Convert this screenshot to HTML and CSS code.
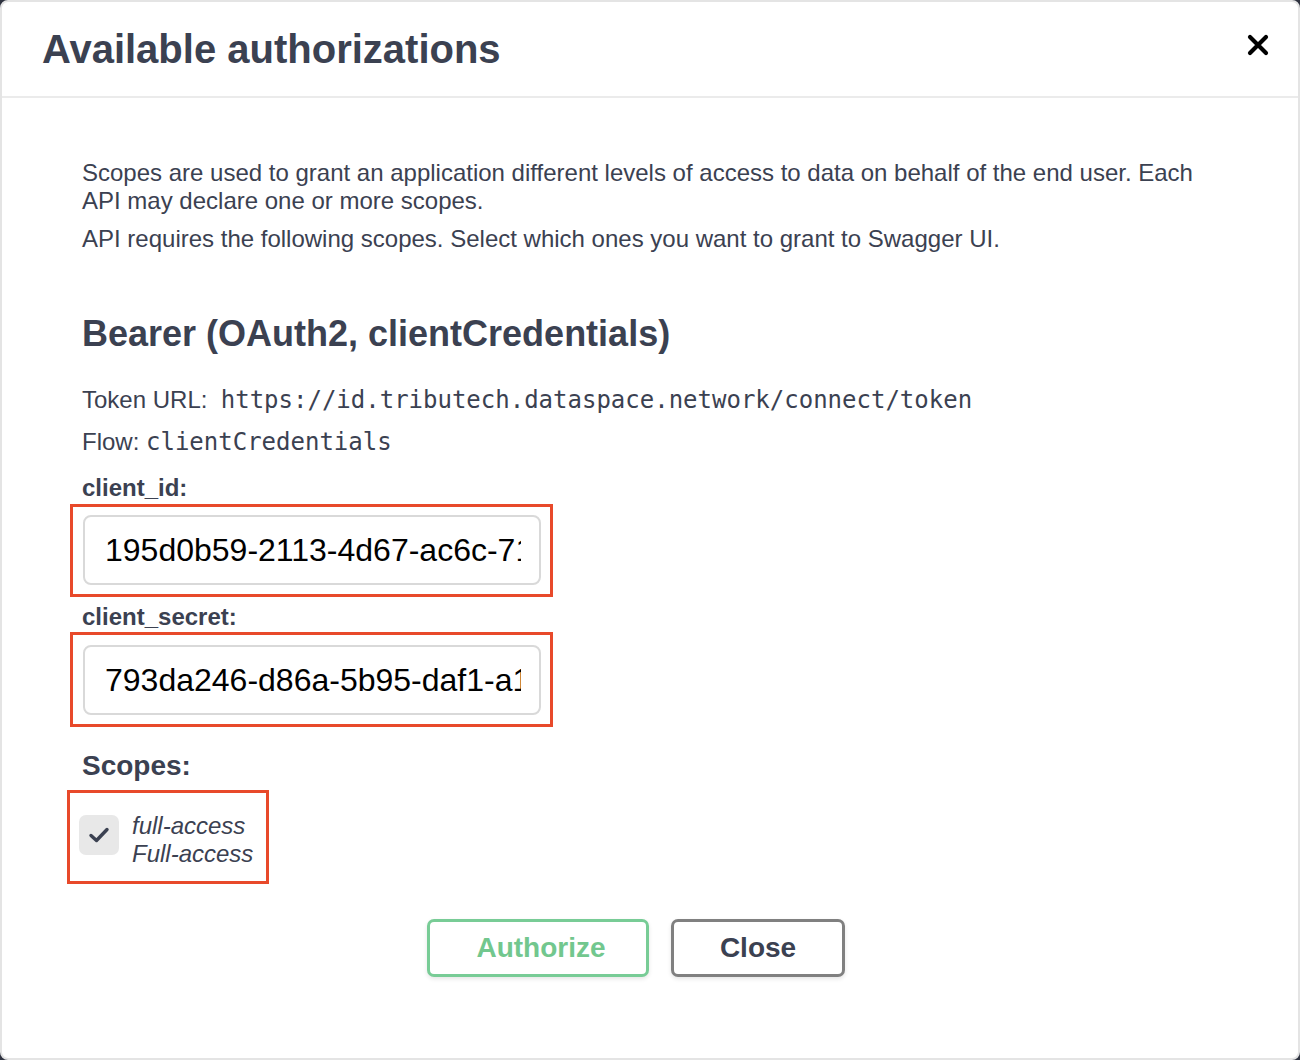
FILE: index.html
```html
<!DOCTYPE html>
<html lang="en">
<head>
<meta charset="utf-8">
<title>Available authorizations</title>
<link rel="stylesheet" href="styles.css">
</head>
<body>
<div class="modal">
  <div class="modal-header">
    <h3 class="modal-title">Available authorizations</h3>
    <button class="close-modal" type="button" aria-label="Close">
      <svg width="24" height="24" viewBox="0 0 24 24"><path d="M4 4 L20 20 M20 4 L4 20" stroke="#000" stroke-width="4.2" stroke-linecap="round" fill="none"/></svg>
    </button>
  </div>
  <div class="modal-content">
    <div class="scope-def">
      <p>Scopes are used to grant an application different levels of access to data on behalf of the end user. Each API may declare one or more scopes.</p>
      <p class="second">API requires the following scopes. Select which ones you want to grant to Swagger UI.</p>
    </div>
    <h4 class="auth-name">Bearer (OAuth2, clientCredentials)</h4>
    <p class="flow-row token-row">Token URL:&nbsp; <code>https://id.tributech.dataspace.network/connect/token</code></p>
    <p class="flow-row flow-line">Flow: <code>clientCredentials</code></p>
    <label class="field-label first-label">client_id:</label>
    <div class="mark mark-input">
      <input class="text-input" type="text" value="195d0b59-2113-4d67-ac6c-71a2e3f4b5c6">
    </div>
    <label class="field-label second-label">client_secret:</label>
    <div class="mark mark-input mark-second">
      <input class="text-input" type="text" value="793da246-d86a-5b95-daf1-a1c2b3d4e5f6">
    </div>
    <h4 class="scopes-label">Scopes:</h4>
    <div class="mark mark-scope">
      <span class="checkbox">
        <svg width="22" height="18" viewBox="0 0 22 18"><path d="M3 9.5 L8.5 14.5 L19 3.5" stroke="#3b4151" stroke-width="3.4" fill="none" stroke-linecap="round" stroke-linejoin="round"/></svg>
      </span>
      <span class="scope-text">
        <span>full-access</span>
        <span>Full-access</span>
      </span>
    </div>
    <div class="btn-wrapper">
      <button class="btn authorize" type="button">Authorize</button>
      <button class="btn btn-close" type="button">Close</button>
    </div>
  </div>
</div>
</body>
</html>
```

FILE: styles.css
```css
* { box-sizing: border-box; }
html, body {
  margin: 0;
  padding: 0;
  background: #2f3340;
}
body {
  font-family: "Liberation Sans", Arial, sans-serif;
  color: #3b4151;
}
.modal {
  width: 1300px;
  height: 1060px;
  background: #fff;
  border: 2px solid #e4e4e4;
  border-radius: 8px;
  overflow: hidden;
}
.modal-header {
  height: 96px;
  border-bottom: 2px solid #ebebeb;
  display: flex;
  align-items: center;
  justify-content: space-between;
  padding: 0 28px 0 40px;
}
.modal-title {
  margin: 0;
  font-size: 40px;
  font-weight: bold;
  line-height: 46px;
  color: #3b4151;
}
.close-modal {
  border: 0;
  background: none;
  padding: 0;
  margin-bottom: 8px;
  width: 24px;
  height: 24px;
  display: flex;
}
.modal-content {
  padding: 61px 80px 0 80px;
  display: flex;
  flex-direction: column;
  align-items: flex-start;
}
.scope-def p {
  margin: 0;
  font-size: 24px;
  line-height: 28px;
  color: #3b4151;
}
.scope-def p.second { margin-top: 10px; }
.auth-name {
  margin: 60px 0 0 0;
  font-size: 36px;
  line-height: 42px;
  font-weight: bold;
}
.flow-row {
  margin: 0;
  font-size: 24px;
  line-height: 28px;
}
.token-row { margin-top: 31px; }
.flow-line { margin-top: 14px; }
.flow-row code {
  font-family: "DejaVu Sans Mono", "Liberation Mono", monospace;
  font-size: 24px;
  color: #3b4151;
}
.field-label {
  display: block;
  font-size: 24px;
  line-height: 28px;
  font-weight: bold;
}
.first-label { margin-top: 18px; }
.second-label { margin-top: 6px; }
.mark {
  border: 3px solid #e8492a;
}
.mark-input {
  margin-top: 2px;
  margin-left: -12px;
  padding: 8px 9px 9px 10px;
}
.mark-second { margin-top: 1px; padding-top: 10px; }
.text-input {
  display: block;
  width: 458px;
  height: 70px;
  border: 2px solid #d9d9d9;
  border-radius: 8px;
  padding: 0 18px 0 20px;
  font-family: "Liberation Sans", Arial, sans-serif;
  font-size: 32px;
  color: #000;
  background: #fff;
  outline: none;
}
.scopes-label {
  margin: 23px 0 0 0;
  font-size: 28px;
  line-height: 32px;
  font-weight: bold;
}
.mark-scope {
  margin-top: 8px;
  margin-left: -15px;
  width: 202px;
  height: 94px;
  display: flex;
  align-items: flex-start;
  gap: 13px;
  padding: 19px 0 0 9px;
}
.checkbox {
  margin-top: 3px;
  width: 40px;
  height: 40px;
  border-radius: 7px;
  background: #e8e8e8;
  display: flex;
  align-items: center;
  justify-content: center;
  flex: none;
}
.scope-text {
  display: flex;
  flex-direction: column;
  font-style: italic;
  font-size: 24px;
  line-height: 28px;
  color: #3b4151;
}
.btn-wrapper {
  align-self: stretch;
  margin-top: 35px;
  display: flex;
  justify-content: center;
  gap: 22px;
  padding-right: 28px;
}
.btn {
  height: 58px;
  border-radius: 7px;
  border: 3px solid #808080;
  background: #fff;
  font-family: "Liberation Sans", Arial, sans-serif;
  font-size: 28px;
  font-weight: bold;
  box-shadow: 0 2px 4px rgba(0, 0, 0, 0.1);
  padding: 0;
}
.authorize {
  width: 222px;
  padding-left: 6px;
  border-color: #78cc96;
  color: #72c78e;
}
.btn-close {
  width: 174px;
  color: #3b4151;
}
```
